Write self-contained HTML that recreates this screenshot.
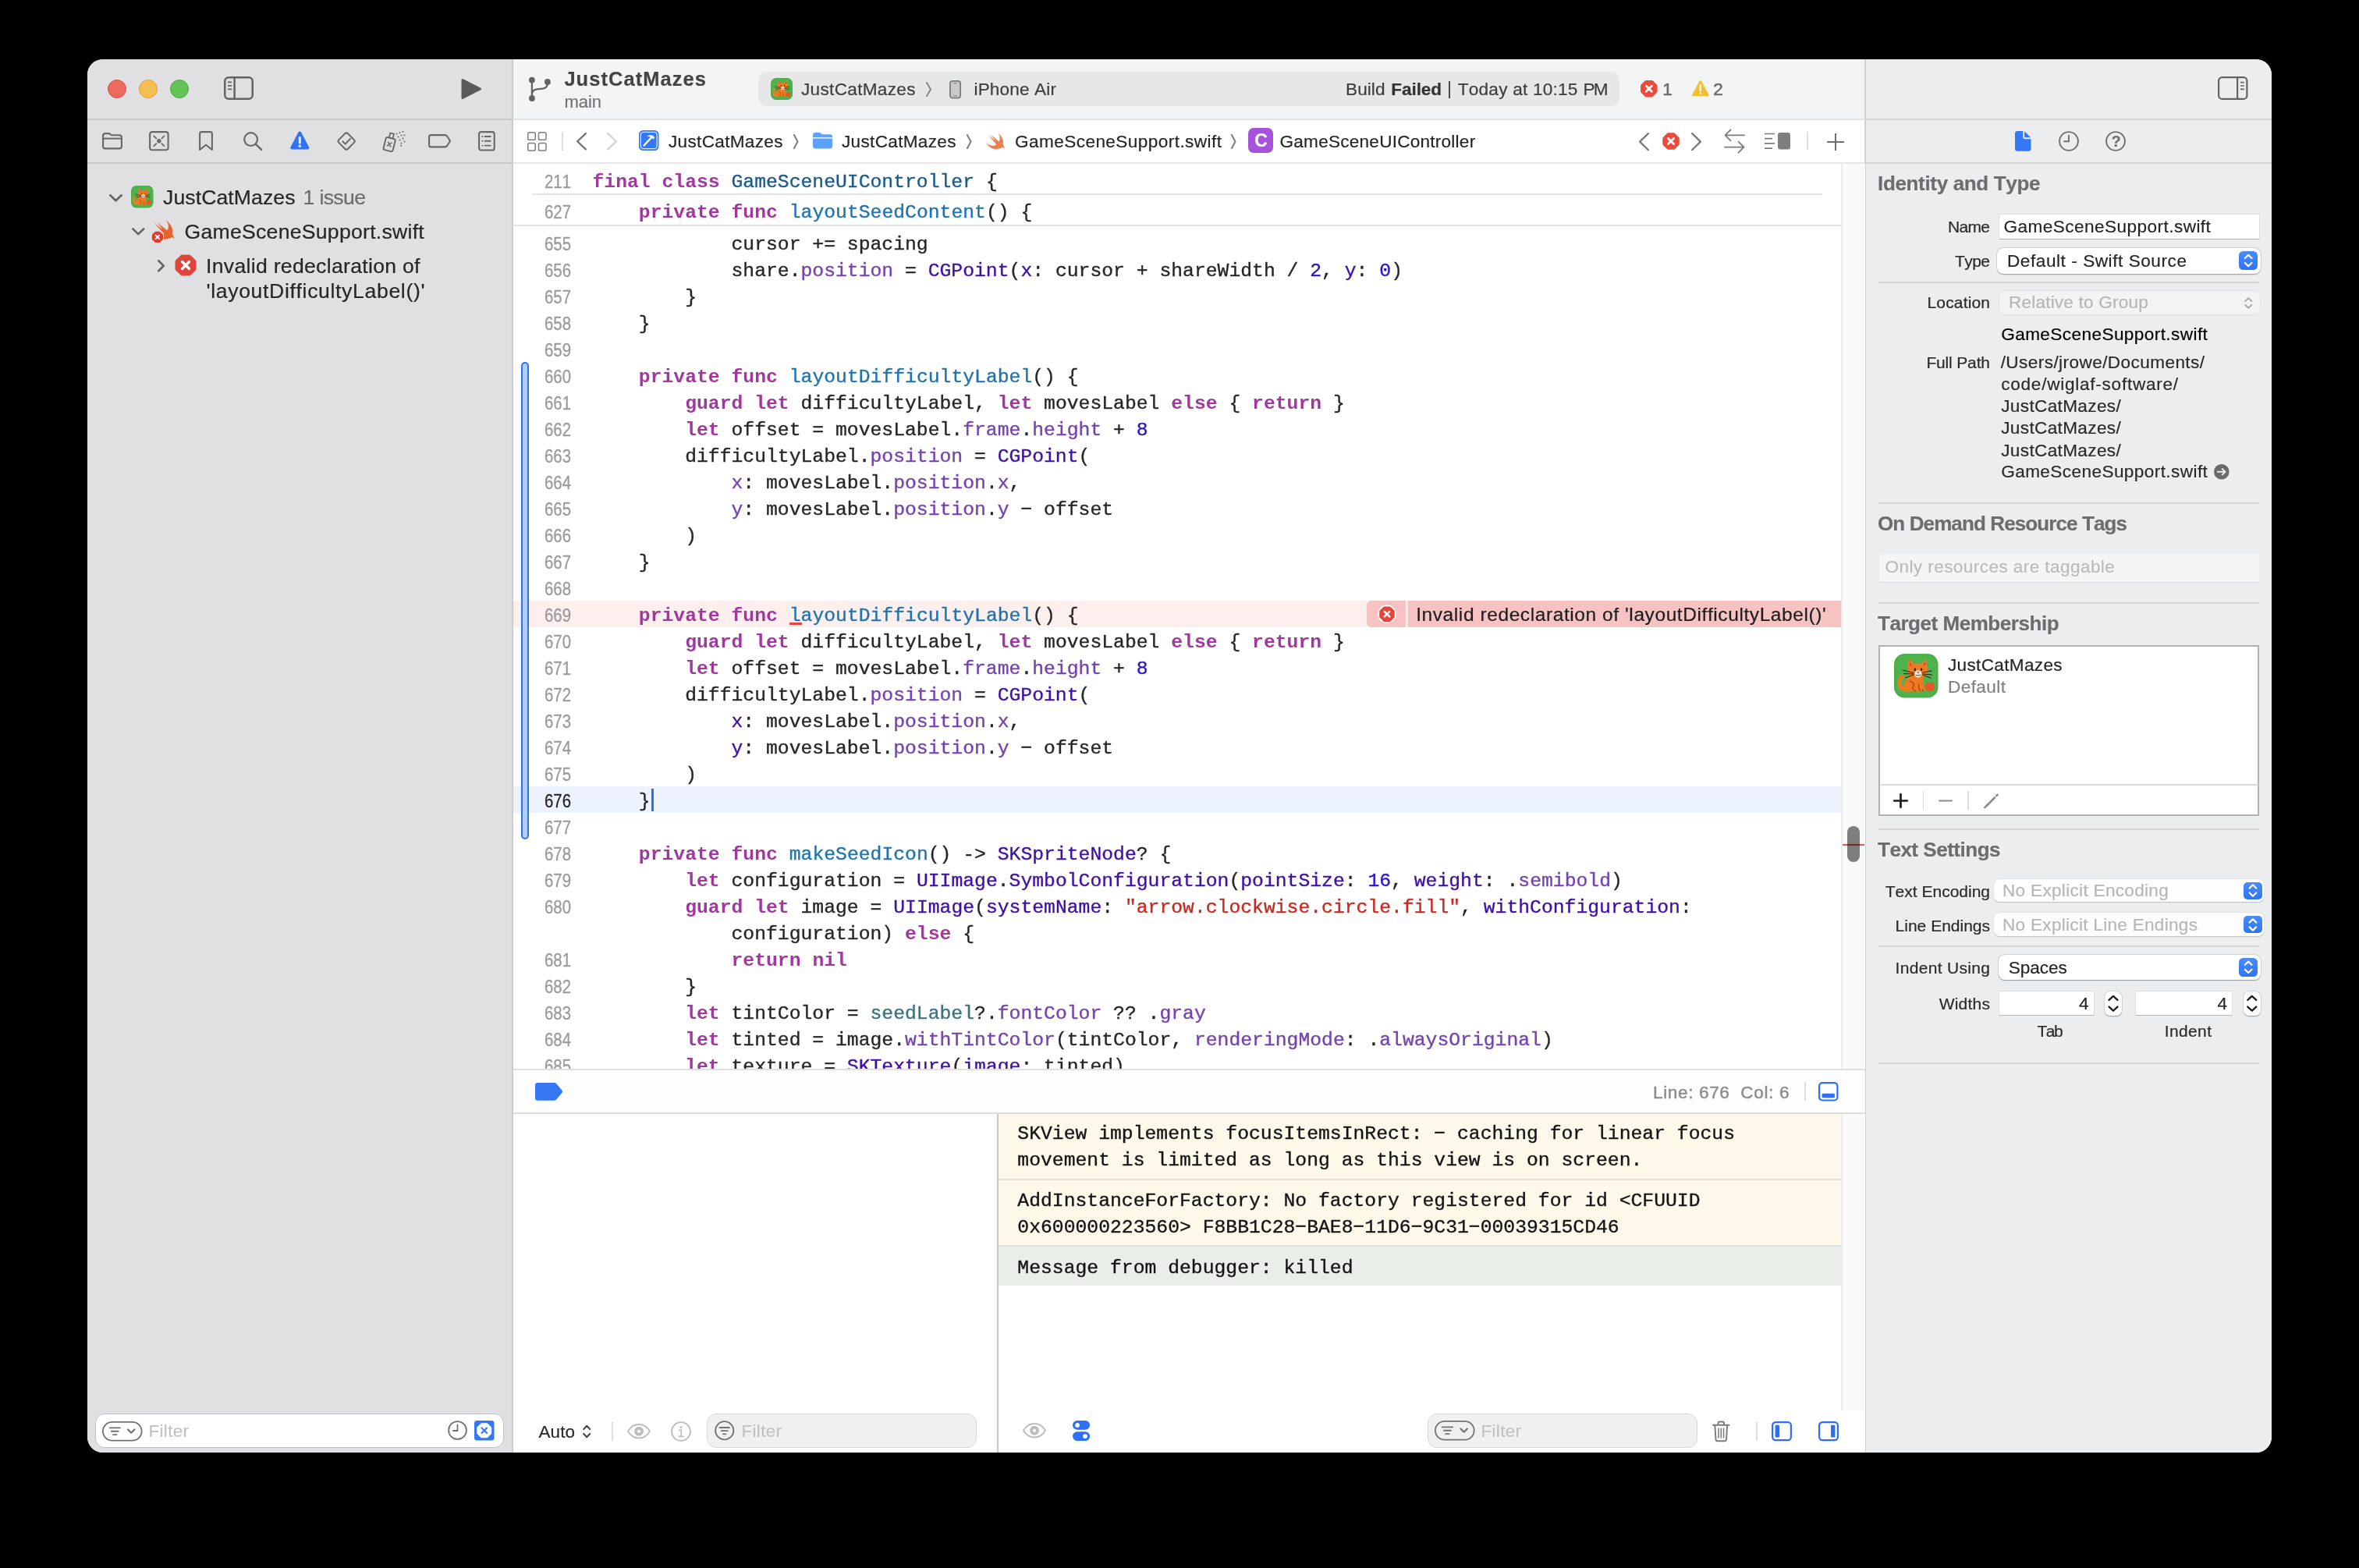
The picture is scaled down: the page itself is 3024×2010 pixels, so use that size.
<!DOCTYPE html>
<html><head><meta charset="utf-8"><title>Xcode</title>
<style>
*{box-sizing:border-box;margin:0;padding:0}
html,body{width:3024px;height:2010px;background:#000;overflow:hidden}
body{font-family:"Liberation Sans",sans-serif;color:#262626;position:relative;font-kerning:none}
#win{position:absolute;left:112px;top:76px;width:2800px;height:1786px;border-radius:20px;overflow:hidden;background:#fff}
#pg{position:absolute;left:-112px;top:-76px;width:3024px;height:2010px;will-change:transform}
.a{position:absolute}
.t{position:absolute;white-space:pre;line-height:1;-webkit-text-stroke:0.2px}
.mono{font-family:"Liberation Mono",monospace}
svg{position:absolute;overflow:visible}
/* code */
.cl{position:absolute;left:759.5px;margin-top:1px;-webkit-text-stroke:0.35px;height:34px;line-height:34px;white-space:pre;font-family:"Liberation Mono",monospace;font-size:24.73px;color:#262626}
.ln{position:absolute;left:632px;width:100px;text-align:right;height:34px;line-height:34px;font-size:23.4px;color:#9a9a9c;white-space:pre;transform:scaleX(0.87);transform-origin:100% 50%;margin-top:1px;-webkit-text-stroke:0.3px}
.k{color:#a2379f;font-weight:bold;-webkit-text-stroke:0}
.td{color:#1a5a8a}
.fd{color:#1f74ad}
.ty{color:#3f10a5}
.pr{color:#7443b1}
.iv{color:#39747b}
.nu{color:#2a12d2}
.st{color:#c9281f}
</style></head>
<body><div id="win"><div id="pg">
<div class="a" style="left:112px;top:76px;width:546px;height:1786px;background:#e0e0e2;"></div>
<div class="a" style="left:655px;top:76px;width:1px;height:1786px;background:#dbdbdd;"></div>
<div class="a" style="left:656px;top:76px;width:1px;height:1786px;background:#d3d3d5;"></div>
<div class="a" style="left:657px;top:76px;width:1px;height:1786px;background:#c4c5c7;"></div>
<div class="a" style="left:112px;top:152px;width:544px;height:2px;background:#c9c9cb;"></div>
<div class="a" style="left:112px;top:208px;width:544px;height:2px;background:#c9c9cb;"></div>
<div class="a" style="left:658px;top:76px;width:1733px;height:76px;background:#f3f4f6;"></div>
<div class="a" style="left:658px;top:152px;width:1733px;height:2px;background:#e3e3e5;"></div>
<div class="a" style="left:658px;top:154px;width:1733px;height:54px;background:#ffffff;"></div>
<div class="a" style="left:658px;top:208px;width:1733px;height:2px;background:#e6e6e6;"></div>
<div class="a" style="left:2391px;top:76px;width:521px;height:1786px;background:#ecedef;"></div>
<div class="a" style="left:2390px;top:76px;width:1.7px;height:1786px;background:#d0d1d3;"></div>
<div class="a" style="left:2392px;top:152px;width:520px;height:2px;background:#d4d5d7;"></div>
<div class="a" style="left:2392px;top:208px;width:520px;height:2px;background:#d4d5d7;"></div>
<div class="a" style="left:138px;top:102px;width:24px;height:24px;border-radius:50%;background:#ed6a5f;border:1px solid #d5544a"></div>
<div class="a" style="left:178px;top:102px;width:24px;height:24px;border-radius:50%;background:#f5bf4f;border:1px solid #d8a13a"></div>
<div class="a" style="left:218px;top:102px;width:24px;height:24px;border-radius:50%;background:#61c455;border:1px solid #4aa63f"></div>
<svg style="left:287px;top:98px;" width="38" height="30" viewBox="0 0 38 30" preserveAspectRatio="none"><rect x="1.25" y="1.25" width="35.5" height="27.5" rx="5" fill="none" stroke="#636366" stroke-width="2.5"/><path d="M13.6 1.5V28.5" stroke="#636366" stroke-width="2.5"/><path d="M5 7.400h5M5 11.900h5M5 16.400h5" stroke="#636366" stroke-width="1.8"/></svg>
<svg style="left:591px;top:100px;" width="27" height="28" viewBox="0 0 27 28" preserveAspectRatio="none"><path d="M2 2.5L24.5 14L2 25.5Z" fill="#5a5a5c" stroke="#5a5a5c" stroke-width="3" stroke-linejoin="round"/></svg>
<svg style="left:674px;top:94px;" width="36" height="40" viewBox="0 0 36 40" preserveAspectRatio="none"><circle cx="7.9" cy="8.6" r="3.9" fill="#636366"/><circle cx="7.9" cy="32" r="3.9" fill="#636366"/><circle cx="27.9" cy="11" r="3.9" fill="#636366"/><path d="M7.9 8.6V32M27.900 12C27.900 17 25.500 19.300 21.500 19.700L14.500 20.400C10.500 20.900 8.300 22.500 7.900 26.500" fill="none" stroke="#636366" stroke-width="2.3"/></svg>
<div class="t" style="left:723.4px;top:89.00px;font-size:25.5px;color:#444446;letter-spacing:1.042px;font-weight:bold;">JustCatMazes</div>
<div class="t" style="left:723.5px;top:120.00px;font-size:22px;color:#737376;letter-spacing:-0.058px;">main</div>
<div class="a" style="left:972px;top:92px;width:1104px;height:44px;background:#e6e7e9;border-radius:11px"></div>
<svg style="left:988px;top:100px;" width="28" height="28" viewBox="0 0 56 56" preserveAspectRatio="none"><rect x="0" y="0" width="56" height="56" rx="13.5" fill="#4bae49"/><rect x="2.500" y="2.500" width="51" height="51" rx="11" fill="#52b650" opacity=".55"/><path d="M15 45.500C8.500 45.500 6.300 40 7.200 35C7.800 31.500 8.300 29 10.200 29.200" fill="none" stroke="#f07a22" stroke-width="5.200" stroke-linecap="round"/><path d="M20.500 28C15.500 32 11.500 38 11.800 43C12 46.500 13.500 48 16 48H38.600C38.900 43 37.800 36 36.800 30Z" fill="#f07a22"/><path d="M17.200 15.500L18.600 7.400C18.700 6.800 19.300 6.700 19.700 7.100L25.200 12.700C27.500 12.300 31.500 12.300 34.800 12.700L39 7.200C39.400 6.700 40 6.900 40.100 7.500L42.200 16C42.600 19 42.500 23 41.500 25.500C40.300 28.800 36 31.500 30.500 31.500C24 31.500 19 29.500 17.500 25.500C16.800 23 16.800 18.500 17.200 15.500Z" fill="#f07a22"/><path d="M19.600 10.600L22.900 14.300L20.200 15.200Z" fill="#e83a3a"/><path d="M39.600 10.400L36.900 13.700L40.300 15Z" fill="#e83a3a"/><circle cx="30.600" cy="25.700" r="4.500" fill="#f6f1e6"/><path d="M29.100 23.200C29.100 22.300 32.100 22.300 32.100 23.200C32.100 24.200 31.100 25 30.600 25C30.100 25 29.100 24.200 29.100 23.200Z" fill="#ee4f7a"/><path d="M27.700 26.600C28 28.200 30.200 28.200 30.600 26.800C31 28.200 33.300 28.200 33.600 26.600" fill="none" stroke="#1d1d1b" stroke-width="0.900" stroke-linecap="round"/><ellipse cx="26.600" cy="20.100" rx="1.150" ry="1.900" fill="#1d1d1b"/><ellipse cx="34.800" cy="19.900" rx="1.150" ry="1.900" fill="#1d1d1b"/><path d="M24.800 24.300L11.200 20.800M25 25.700L12.300 25.400M24.800 26.900L14.300 30.600M36.600 23.900L47.800 21.700M36.600 25.700L48.200 26.800M36.600 27L46.700 30.800" stroke="#1d1d1b" stroke-width="0.950" stroke-linecap="round"/><path d="M20.100 35.300C23.500 35.300 25.700 37.500 25 40.500C24.500 42.500 22.500 43.500 23.800 44.800C25 45.500 26.500 46 27.200 47.600" fill="none" stroke="#7a3a10" stroke-width="1" stroke-linecap="round"/><path d="M31.300 39V43.500C31.500 45 33 46 33.500 47.600M36 45.500L37 47.500" fill="none" stroke="#7a3a10" stroke-width="1" stroke-linecap="round"/><circle cx="45.500" cy="42" r="5.900" fill="#e84a1f"/><path d="M41.500 39.500L46 37M41 42.500L48.500 38.300M42 45.300L50.300 40.500M44.500 47L51 43" stroke="#f4793f" stroke-width="0.800" stroke-linecap="round"/></svg>
<div class="t" style="left:1027.0px;top:104.00px;font-size:22.6px;color:#3d3d3f;letter-spacing:0.303px;">JustCatMazes</div>
<svg style="left:1186.5px;top:105px;" width="7" height="19" viewBox="0 0 7 19" preserveAspectRatio="none"><path d="M1 1L6 9.500L1 18" fill="none" stroke="#858587" stroke-width="2" stroke-linecap="round" stroke-linejoin="round"/></svg>
<svg style="left:1217px;top:102.5px;" width="15" height="23.5" viewBox="0 0 15 23.5" preserveAspectRatio="none"><rect x="0.9" y="0.9" width="13.2" height="21.7" rx="3" fill="#c9c9cb" stroke="#7c7c7e" stroke-width="1.8"/><path d="M5.500 3.800h4M5 20h5" stroke="#7c7c7e" stroke-width="1.100"/></svg>
<div class="t" style="left:1248.5px;top:104.00px;font-size:22.6px;color:#3d3d3f;letter-spacing:0.141px;">iPhone Air</div>
<div class="t" style="left:1725.0px;top:104.00px;font-size:22.6px;color:#3d3d3f;letter-spacing:0.065px;">Build</div>
<div class="t" style="left:1783.2px;top:104.00px;font-size:22.6px;color:#333335;letter-spacing:-0.063px;font-weight:bold;">Failed</div>
<div class="a" style="left:1857px;top:104px;width:2px;height:22px;background:#4a4a4c;"></div>
<div class="t" style="left:1868.8px;top:104.00px;font-size:22.6px;color:#3d3d3f;letter-spacing:0.213px;">Today at 10:15</div>
<div class="t" style="left:2029.5px;top:104.00px;font-size:22.6px;color:#3d3d3f;letter-spacing:-1.900px;">PM</div>
<svg style="left:0;top:0" width="3024" height="2010"><polygon points="2122.40,117.26 2117.36,122.30 2110.24,122.30 2105.20,117.26 2105.20,110.14 2110.24,105.10 2117.36,105.10 2122.40,110.14" fill="#e74c3c" stroke="#e74c3c" stroke-width="4.30" stroke-linejoin="round"/><path d="M2110.25 110.15L2117.35 117.25M2117.35 110.15L2110.25 117.25" stroke="#fff" stroke-width="2.69" stroke-linecap="round"/></svg>
<div class="t" style="left:2131.3px;top:104.00px;font-size:22.5px;color:#6c6c6e;-webkit-text-stroke:0.55px #6c6c6e;">1</div>
<svg style="left:2169px;top:103px;" width="21.5" height="21" viewBox="0 0 21.5 21" preserveAspectRatio="none"><path d="M10.75 1.800L20 18.800H1.500Z" fill="#f0c02e" stroke="#f0c02e" stroke-width="3" stroke-linejoin="round"/><path d="M10.750 6.500V13" stroke="#fff" stroke-width="2.300" stroke-linecap="round"/><circle cx="10.750" cy="16.400" r="1.350" fill="#fff"/></svg>
<div class="t" style="left:2196.3px;top:104.00px;font-size:22.5px;color:#6c6c6e;-webkit-text-stroke:0.55px #6c6c6e;">2</div>
<svg style="left:2843px;top:98px;" width="38.5" height="30" viewBox="0 0 38.5 30" preserveAspectRatio="none"><rect x="1.100" y="1.100" width="36.300" height="27.800" rx="4.500" fill="none" stroke="#636366" stroke-width="2.200"/><path d="M25.100 1.500V28.500" stroke="#636366" stroke-width="2.200"/><path d="M29 7.600h4.800M29 12h4.800M29 16.400h4.800" stroke="#636366" stroke-width="1.600"/></svg>
<svg style="left:131px;top:170px;" width="26" height="21.5" viewBox="0 0 26 21.5" preserveAspectRatio="none"><path d="M1.100 4C1.100 2.400 2.400 1.100 4 1.100H8.300C9.300 1.100 9.900 1.400 10.500 2.100L11.600 3.300H22C23.600 3.300 24.900 4.600 24.900 6.200V17.500C24.900 19.100 23.600 20.400 22 20.400H4C2.400 20.400 1.100 19.100 1.100 17.500Z" fill="none" stroke="#68686b" stroke-width="2.100" stroke-linejoin="round"/><path d="M1.500 7.600H24.500" stroke="#68686b" stroke-width="2"/></svg>
<svg style="left:191.3px;top:168px;" width="25.7" height="25.4" viewBox="0 0 25.7 25.4" preserveAspectRatio="none"><rect x="1.100" y="1.100" width="23.500" height="23.200" rx="3" fill="none" stroke="#68686b" stroke-width="2.100"/><circle cx="12.850" cy="12.700" r="2.700" fill="#68686b"/><path d="M6.300 6.300L9.300 9.300M19.400 6.300L16.400 9.300M6.300 19.100L9.300 16.100M19.400 19.100L16.400 16.100" stroke="#68686b" stroke-width="1.800" stroke-linecap="round"/></svg>
<svg style="left:255px;top:168px;" width="18" height="25.6" viewBox="0 0 18 25.6" preserveAspectRatio="none"><path d="M1.100 3.500C1.100 2.200 2.100 1.100 3.500 1.100H14.500C15.900 1.100 16.900 2.200 16.900 3.500V24L9 17.800L1.100 24Z" fill="none" stroke="#68686b" stroke-width="2.100" stroke-linejoin="round"/></svg>
<svg style="left:312px;top:169px;" width="24.5" height="24" viewBox="0 0 24.5 24" preserveAspectRatio="none"><circle cx="9.600" cy="9.600" r="8.400" fill="none" stroke="#68686b" stroke-width="2.200"/><path d="M15.800 15.800L23.200 22.800" stroke="#68686b" stroke-width="2.500" stroke-linecap="round"/></svg>
<svg style="left:371.7px;top:167.7px;" width="24.6" height="24.5" viewBox="0 0 24.6 24.5" preserveAspectRatio="none"><path d="M12.300 2.500L22.300 21.500H2.300Z" fill="#3273f6" stroke="#3273f6" stroke-width="4" stroke-linejoin="round"/><path d="M12.300 8.300V15" stroke="#e8efff" stroke-width="3" stroke-linecap="round"/><circle cx="12.300" cy="19.300" r="1.700" fill="#e8efff"/></svg>
<svg style="left:431px;top:168px;" width="26.2" height="26" viewBox="0 0 26.2 26" preserveAspectRatio="none"><rect x="4.900" y="4.800" width="16.400" height="16.400" rx="2.700" transform="rotate(45 13.100 13)" fill="none" stroke="#68686b" stroke-width="2"/><path d="M8.300 13.300L11.700 16.500L18 9.800" fill="none" stroke="#68686b" stroke-width="1.900" stroke-linecap="round" stroke-linejoin="round"/></svg>
<svg style="left:489.5px;top:168px;" width="30.5" height="27" viewBox="0 0 30.5 27" preserveAspectRatio="none"><g transform="rotate(14 9 16)"><rect x="3.200" y="8.800" width="12.400" height="16.500" rx="2.200" fill="none" stroke="#68686b" stroke-width="1.900"/><rect x="7" y="2.600" width="4.800" height="6" fill="none" stroke="#68686b" stroke-width="1.700"/><path d="M7.200 14.500L11.600 19.300M11.600 14.500L7.200 19.300" stroke="#68686b" stroke-width="1.600" stroke-linecap="round"/></g><circle cx="18.5" cy="3.5" r="0.950" fill="#68686b"/><circle cx="22.5" cy="2" r="0.950" fill="#68686b"/><circle cx="26.5" cy="0.8" r="0.950" fill="#68686b"/><circle cx="20.5" cy="7.5" r="0.950" fill="#68686b"/><circle cx="24.5" cy="5.5" r="0.950" fill="#68686b"/><circle cx="28.5" cy="5.2" r="0.950" fill="#68686b"/><circle cx="22.5" cy="11.5" r="0.950" fill="#68686b"/><circle cx="26.5" cy="9.5" r="0.950" fill="#68686b"/><circle cx="24.5" cy="15.5" r="0.950" fill="#68686b"/><circle cx="28.5" cy="13.5" r="0.950" fill="#68686b"/><circle cx="24.2" cy="18.8" r="0.950" fill="#68686b"/></svg>
<svg style="left:549px;top:172.3px;" width="29.5" height="17.5" viewBox="0 0 29.5 17.5" preserveAspectRatio="none"><path d="M1.100 3.600C1.100 2.200 2.200 1.100 3.600 1.100H21.600C22.600 1.100 23.300 1.500 23.900 2.300L28.100 8.750L23.900 15.200C23.300 16 22.600 16.400 21.600 16.400H3.600C2.200 16.400 1.100 15.300 1.100 13.900Z" fill="none" stroke="#68686b" stroke-width="2.100" stroke-linejoin="round"/></svg>
<svg style="left:613.2px;top:168px;" width="21.8" height="25.6" viewBox="0 0 21.8 25.6" preserveAspectRatio="none"><rect x="1.100" y="1.100" width="19.600" height="23.400" rx="2.600" fill="none" stroke="#68686b" stroke-width="2.100"/><path d="M8 7H16.500M8 12.800H16.500M8 18.600H16.500" stroke="#68686b" stroke-width="1.900"/><path d="M4.600 7H6.400M4.600 12.800H6.400M4.600 18.600H6.400" stroke="#68686b" stroke-width="1.900"/></svg>
<svg style="left:140px;top:248.5px;" width="17" height="9.5" viewBox="0 0 17 9.5" preserveAspectRatio="none"><path d="M1.3 1.3L8.5 8.2L15.7 1.3" fill="none" stroke="#636366" stroke-width="2.6" stroke-linecap="round" stroke-linejoin="round"/></svg>
<svg style="left:167.5px;top:238px;" width="28.5" height="28.5" viewBox="0 0 56 56" preserveAspectRatio="none"><rect x="0" y="0" width="56" height="56" rx="13.5" fill="#4bae49"/><rect x="2.500" y="2.500" width="51" height="51" rx="11" fill="#52b650" opacity=".55"/><path d="M15 45.500C8.500 45.500 6.300 40 7.200 35C7.800 31.500 8.300 29 10.200 29.200" fill="none" stroke="#f07a22" stroke-width="5.200" stroke-linecap="round"/><path d="M20.500 28C15.500 32 11.500 38 11.800 43C12 46.500 13.500 48 16 48H38.600C38.900 43 37.800 36 36.800 30Z" fill="#f07a22"/><path d="M17.200 15.500L18.600 7.400C18.700 6.800 19.300 6.700 19.700 7.100L25.200 12.700C27.500 12.300 31.500 12.300 34.800 12.700L39 7.200C39.400 6.700 40 6.900 40.100 7.500L42.200 16C42.600 19 42.500 23 41.500 25.500C40.300 28.800 36 31.500 30.500 31.500C24 31.500 19 29.500 17.500 25.500C16.800 23 16.800 18.500 17.200 15.500Z" fill="#f07a22"/><path d="M19.600 10.600L22.900 14.300L20.200 15.200Z" fill="#e83a3a"/><path d="M39.600 10.400L36.900 13.700L40.300 15Z" fill="#e83a3a"/><circle cx="30.600" cy="25.700" r="4.500" fill="#f6f1e6"/><path d="M29.100 23.200C29.100 22.300 32.100 22.300 32.100 23.200C32.100 24.200 31.100 25 30.600 25C30.100 25 29.100 24.200 29.100 23.200Z" fill="#ee4f7a"/><path d="M27.700 26.600C28 28.200 30.200 28.200 30.600 26.800C31 28.200 33.300 28.200 33.600 26.600" fill="none" stroke="#1d1d1b" stroke-width="0.900" stroke-linecap="round"/><ellipse cx="26.600" cy="20.100" rx="1.150" ry="1.900" fill="#1d1d1b"/><ellipse cx="34.800" cy="19.900" rx="1.150" ry="1.900" fill="#1d1d1b"/><path d="M24.800 24.300L11.200 20.800M25 25.700L12.300 25.400M24.800 26.900L14.300 30.600M36.600 23.900L47.800 21.700M36.600 25.700L48.200 26.800M36.600 27L46.700 30.800" stroke="#1d1d1b" stroke-width="0.950" stroke-linecap="round"/><path d="M20.100 35.300C23.500 35.300 25.700 37.500 25 40.500C24.500 42.500 22.500 43.500 23.800 44.800C25 45.500 26.500 46 27.200 47.600" fill="none" stroke="#7a3a10" stroke-width="1" stroke-linecap="round"/><path d="M31.300 39V43.500C31.500 45 33 46 33.500 47.600M36 45.500L37 47.500" fill="none" stroke="#7a3a10" stroke-width="1" stroke-linecap="round"/><circle cx="45.500" cy="42" r="5.900" fill="#e84a1f"/><path d="M41.500 39.500L46 37M41 42.500L48.500 38.300M42 45.300L50.300 40.500M44.500 47L51 43" stroke="#f4793f" stroke-width="0.800" stroke-linecap="round"/></svg>
<div class="t" style="left:209.0px;top:240.00px;font-size:26.6px;color:#262628;letter-spacing:0.090px;">JustCatMazes</div>
<div class="t" style="left:388.5px;top:240.00px;font-size:26.6px;color:#6c6c6f;letter-spacing:-0.628px;">1 issue</div>
<svg style="left:168.5px;top:292px;" width="16.5" height="9.5" viewBox="0 0 16.5 9.5" preserveAspectRatio="none"><path d="M1.3 1.3L8.25 8.2L15.2 1.3" fill="none" stroke="#636366" stroke-width="2.6" stroke-linecap="round" stroke-linejoin="round"/></svg>
<svg style="left:194.4px;top:282.4px;" width="30.3" height="25.9" viewBox="0 0 24.5 22" preserveAspectRatio="none"><path fill="#e7652c" d="M15.2 .3C17.8 2.2 20.6 6 21.600 9.300C22.300 11.500 22.200 13.400 21.600 14.700C22.600 16.300 23.500 19 23.700 21.400C22.900 20 22.400 19.200 21.600 18.800C19.800 19.900 16.500 21.300 12.200 21.100C7 20.900 2.800 17.500 .300 13.700C3 15.500 6 16.600 8.900 16.800C10.800 16.900 12.200 16 13.200 15L3.100 3.600L11.700 10.100L6.100 2.500L16.500 11.400C17.600 9.500 18 7 17.500 4.800C17 3 16.200 1.500 15.200 .300Z"/></svg>
<svg style="left:0;top:0" width="3024" height="2010"><circle cx="201.9" cy="303.9" r="8.300" fill="#e0e0e2"/></svg>
<svg style="left:0;top:0" width="3024" height="2010"><polygon points="207.58,306.25 204.25,309.58 199.55,309.58 196.22,306.25 196.22,301.55 199.55,298.22 204.25,298.22 207.58,301.55" fill="#e23b2e" stroke="#e23b2e" stroke-width="2.84" stroke-linejoin="round"/><path d="M199.56 301.56L204.24 306.24M204.24 301.56L199.56 306.24" stroke="#fff" stroke-width="1.77" stroke-linecap="round"/></svg>
<div class="t" style="left:236.5px;top:284.00px;font-size:26.6px;color:#262628;letter-spacing:0.272px;">GameSceneSupport.swift</div>
<svg style="left:201.5px;top:333px;" width="9" height="15.5" viewBox="0 0 9 15.5" preserveAspectRatio="none"><path d="M1.25 1.25L7.75 7.75L1.25 14.25" fill="none" stroke="#636366" stroke-width="2.5" stroke-linecap="round" stroke-linejoin="round"/></svg>
<svg style="left:0;top:0" width="3024" height="2010"><polygon points="248.80,344.47 242.47,350.80 233.53,350.80 227.20,344.47 227.20,335.53 233.53,329.20 242.47,329.20 248.80,335.53" fill="#e0443a" stroke="#e0443a" stroke-width="5.40" stroke-linejoin="round"/><path d="M233.54 335.55L242.46 344.45M242.46 335.55L233.54 344.45" stroke="#fff" stroke-width="3.38" stroke-linecap="round"/></svg>
<div class="t" style="left:264.0px;top:328.00px;font-size:26.6px;color:#262628;letter-spacing:0.300px;">Invalid redeclaration of</div>
<div class="t" style="left:264.5px;top:360.00px;font-size:26.6px;color:#262628;letter-spacing:0.650px;">'layoutDifficultyLabel()'</div>
<div class="a" style="left:122px;top:1812px;width:523.5px;height:43.5px;border-radius:12px;background:#fff;border:1.500px solid #c3c3c5"></div>
<svg style="left:130.8px;top:1821.5px;" width="51.5" height="25.5" viewBox="0 0 51.5 25.5" preserveAspectRatio="none"><rect x="0.900" y="0.900" width="49.700" height="23.700" rx="11.850" fill="none" stroke="#717173" stroke-width="1.800"/><path d="M9.500 8.300H23M11.800 12.750H20.700M14 17.200H18.500" stroke="#717173" stroke-width="1.800" stroke-linecap="round"/><path d="M33 10.500L37.200 14.700L41.400 10.500" fill="none" stroke="#717173" stroke-width="2.200" stroke-linecap="round" stroke-linejoin="round"/></svg>
<div class="t" style="left:190.5px;top:1824.00px;font-size:22.3px;color:#c2c2c4;letter-spacing:0.390px;">Filter</div>
<svg style="left:574.4px;top:1821.3px;" width="25" height="25" viewBox="0 0 25 25" preserveAspectRatio="none"><circle cx="12.500" cy="12.500" r="11.400" fill="none" stroke="#717173" stroke-width="1.800"/><path d="M12.500 5.500V13H6.800" fill="none" stroke="#717173" stroke-width="1.800" stroke-linecap="round" stroke-linejoin="round"/></svg>
<svg style="left:608.3px;top:1821.3px;" width="25.5" height="25.5" viewBox="0 0 25.5 25.5" preserveAspectRatio="none"><rect x="0" y="0" width="25.500" height="25.500" rx="3.500" fill="#3478f6"/><path d="M8.800 3.800H16.700L21.700 8.800V16.700L16.700 21.700H8.800L3.800 16.700V8.800Z" fill="#fff" stroke="#fff" stroke-width="1" stroke-linejoin="round"/><path d="M9.500 9.500L16 16M16 9.500L9.500 16" stroke="#3478f6" stroke-width="2.200" stroke-linecap="round"/></svg>
<svg style="left:676px;top:169px;" width="25.5" height="25" viewBox="0 0 25.5 25" preserveAspectRatio="none"><rect x="0.75" y="0.75" width="9.5" height="9.500" rx="1.800" fill="none" stroke="#7e7e80" stroke-width="1.500"/><rect x="0.75" y="14.5" width="9.5" height="9.500" rx="1.800" fill="none" stroke="#7e7e80" stroke-width="1.500"/><rect x="14.5" y="0.75" width="9.5" height="9.500" rx="1.800" fill="none" stroke="#7e7e80" stroke-width="1.500"/><rect x="14.5" y="14.5" width="9.5" height="9.500" rx="1.800" fill="none" stroke="#7e7e80" stroke-width="1.500"/></svg>
<div class="a" style="left:720px;top:169px;width:2px;height:24px;background:#dddddf;"></div>
<svg style="left:739px;top:170px;" width="13" height="22.5" viewBox="0 0 13 22.5" preserveAspectRatio="none"><path d="M11.9 1.1L1.1 11.25L11.9 21.4" fill="none" stroke="#6f6f71" stroke-width="2.2" stroke-linecap="round" stroke-linejoin="round"/></svg>
<svg style="left:778px;top:170px;" width="13" height="22.5" viewBox="0 0 13 22.5" preserveAspectRatio="none"><path d="M1.1 1.1L11.9 11.25L1.1 21.4" fill="none" stroke="#d2d2d4" stroke-width="2.2" stroke-linecap="round" stroke-linejoin="round"/></svg>
<svg style="left:819px;top:167px;" width="25.5" height="26" viewBox="0 0 25.5 26" preserveAspectRatio="none"><rect x="0" y="0" width="25.500" height="26" rx="5.500" fill="#3478f6"/><rect x="2.300" y="2.300" width="20.900" height="21.400" rx="3.600" fill="none" stroke="#dbe8ff" stroke-width="1.300"/><path d="M6.500 19.500L15.500 9.800" stroke="#fff" stroke-width="2.400" stroke-linecap="round"/><path d="M11.300 7.600C14 5.600 17.500 6.300 20 9.300L18.300 10.900C17.300 9.900 16.500 9.600 15.800 10.100L14.300 8.600C14.800 7.900 13.300 7.300 11.300 7.600Z" fill="#fff" stroke="#fff" stroke-width="0.800" stroke-linejoin="round"/></svg>
<div class="t" style="left:857.0px;top:171.00px;font-size:22.6px;color:#262626;letter-spacing:0.303px;">JustCatMazes</div>
<svg style="left:1017px;top:171.7px;" width="6.5" height="19" viewBox="0 0 6.5 19" preserveAspectRatio="none"><path d="M1 1L5.5 9.5L1 18" fill="none" stroke="#808082" stroke-width="2.1" stroke-linecap="round" stroke-linejoin="round"/></svg>
<svg style="left:1042px;top:169.5px;" width="25" height="20.5" viewBox="0 0 25 20.5" preserveAspectRatio="none"><path d="M0 3C0 1.300 1.300 0 3 0H8.200C9.400 0 10 .400 10.800 1.300L11.800 2.300H22C23.700 2.300 25 3.600 25 5.300V6.200H0Z" fill="#5da2f8"/><path d="M0 7.600H25V17.500C25 19.200 23.700 20.500 22 20.500H3C1.300 20.500 0 19.200 0 17.500Z" fill="#5da2f8"/></svg>
<div class="t" style="left:1079.0px;top:171.00px;font-size:22.6px;color:#262626;letter-spacing:0.303px;">JustCatMazes</div>
<svg style="left:1238.5px;top:171.7px;" width="6.5" height="19" viewBox="0 0 6.5 19" preserveAspectRatio="none"><path d="M1 1L5.5 9.5L1 18" fill="none" stroke="#808082" stroke-width="2.1" stroke-linecap="round" stroke-linejoin="round"/></svg>
<svg style="left:1264px;top:169.5px;" width="24.5" height="22" viewBox="0 0 24.5 22" preserveAspectRatio="none"><path fill="#ee8050" d="M15.2 .3C17.8 2.2 20.6 6 21.600 9.300C22.300 11.500 22.200 13.400 21.600 14.700C22.600 16.300 23.500 19 23.700 21.400C22.900 20 22.400 19.200 21.600 18.800C19.800 19.900 16.500 21.300 12.200 21.100C7 20.900 2.800 17.500 .300 13.700C3 15.500 6 16.600 8.900 16.800C10.800 16.900 12.200 16 13.200 15L3.100 3.600L11.700 10.100L6.100 2.500L16.500 11.400C17.600 9.500 18 7 17.500 4.800C17 3 16.200 1.500 15.200 .300Z"/></svg>
<div class="t" style="left:1301.0px;top:171.00px;font-size:22.6px;color:#262626;letter-spacing:0.417px;">GameSceneSupport.swift</div>
<svg style="left:1578px;top:171.7px;" width="6.5" height="19" viewBox="0 0 6.5 19" preserveAspectRatio="none"><path d="M1 1L5.5 9.5L1 18" fill="none" stroke="#808082" stroke-width="2.1" stroke-linecap="round" stroke-linejoin="round"/></svg>
<div class="a" style="left:1600px;top:164px;width:32px;height:32px;border-radius:7px;background:#a653d9"></div>
<div class="t" style="left:1608.2px;top:169.00px;font-size:23px;color:#ffffff;font-weight:bold;">C</div>
<div class="t" style="left:1640.5px;top:171.00px;font-size:22.6px;color:#262626;letter-spacing:0.227px;">GameSceneUIController</div>
<svg style="left:2100.8px;top:169.6px;" width="13" height="23.3" viewBox="0 0 13 23.3" preserveAspectRatio="none"><path d="M11.9 1.1L1.1 11.65L11.9 22.2" fill="none" stroke="#777779" stroke-width="2.2" stroke-linecap="round" stroke-linejoin="round"/></svg>
<svg style="left:0;top:0" width="3024" height="2010"><polygon points="2150.60,184.56 2145.56,189.60 2138.44,189.60 2133.40,184.56 2133.40,177.44 2138.44,172.40 2145.56,172.40 2150.60,177.44" fill="#e74c3c" stroke="#e74c3c" stroke-width="4.30" stroke-linejoin="round"/><path d="M2138.45 177.45L2145.55 184.55M2145.55 177.45L2138.45 184.55" stroke="#fff" stroke-width="2.69" stroke-linecap="round"/></svg>
<svg style="left:2168px;top:169.6px;" width="13" height="23.3" viewBox="0 0 13 23.3" preserveAspectRatio="none"><path d="M1.1 1.1L11.9 11.65L1.1 22.2" fill="none" stroke="#777779" stroke-width="2.2" stroke-linecap="round" stroke-linejoin="round"/></svg>
<svg style="left:2210px;top:165px;" width="27" height="32" viewBox="0 0 27 32" preserveAspectRatio="none"><path d="M26 8.300H1.500M8.500 1.300L1.500 8.300L8.500 15.300" fill="none" stroke="#7b7b7d" stroke-width="1.800" stroke-linecap="round" stroke-linejoin="round"/><path d="M1 23.700H25.500M18.500 16.700L25.500 23.700L18.500 30.700" fill="none" stroke="#7b7b7d" stroke-width="1.800" stroke-linecap="round" stroke-linejoin="round"/></svg>
<svg style="left:2262.2px;top:170px;" width="33" height="21.8" viewBox="0 0 33 21.8" preserveAspectRatio="none"><path d="M0 1.500H13M0 7.700H10M0 13.900H13M0 20.100H10" stroke="#7b7b7d" stroke-width="1.700"/><rect x="17" y="0" width="16" height="21.500" rx="3.200" fill="#7e7e80"/></svg>
<div class="a" style="left:2316px;top:169px;width:2px;height:23px;background:#dddddf;"></div>
<svg style="left:2342px;top:171px;" width="22" height="22" viewBox="0 0 22 22" preserveAspectRatio="none"><path d="M11 0.800V21.200M0.800 11H21.200" stroke="#6f6f71" stroke-width="2" stroke-linecap="round"/></svg>
<div class="a" style="left:658px;top:210px;width:1733px;height:1161px;background:#ffffff;"></div>
<div class="a" style="left:2360px;top:210px;width:30px;height:1161px;background:#fafafa;"></div>
<div class="a" style="left:2360px;top:210px;width:2px;height:1161px;background:#ececec;"></div>
<div class="a" style="left:658px;top:770px;width:1094px;height:34px;background:#fcefee;"></div>
<div class="a" style="left:658px;top:1008px;width:1702px;height:34px;background:#ecf3fe;"></div>
<div class="a" style="left:0;top:210px;width:2360px;height:1161px;overflow:hidden"><div class="a" style="left:0;top:-210px;width:3024px;height:2010px">
<div class="ln" style="top:295px;color:#9a9a9c">655</div>
<div class="cl" style="top:295px">            cursor += spacing</div>
<div class="ln" style="top:329px;color:#9a9a9c">656</div>
<div class="cl" style="top:329px">            share.<span class="pr">position</span> = <span class="ty">CGPoint</span>(<span class="ty">x</span>: cursor + shareWidth / <span class="nu">2</span>, <span class="ty">y</span>: <span class="nu">0</span>)</div>
<div class="ln" style="top:363px;color:#9a9a9c">657</div>
<div class="cl" style="top:363px">        }</div>
<div class="ln" style="top:397px;color:#9a9a9c">658</div>
<div class="cl" style="top:397px">    }</div>
<div class="ln" style="top:431px;color:#9a9a9c">659</div>
<div class="cl" style="top:431px"></div>
<div class="ln" style="top:465px;color:#9a9a9c">660</div>
<div class="cl" style="top:465px">    <span class="k">private</span> <span class="k">func</span> <span class="fd">layoutDifficultyLabel</span>() {</div>
<div class="ln" style="top:499px;color:#9a9a9c">661</div>
<div class="cl" style="top:499px">        <span class="k">guard</span> <span class="k">let</span> difficultyLabel, <span class="k">let</span> movesLabel <span class="k">else</span> { <span class="k">return</span> }</div>
<div class="ln" style="top:533px;color:#9a9a9c">662</div>
<div class="cl" style="top:533px">        <span class="k">let</span> offset = movesLabel.<span class="pr">frame</span>.<span class="pr">height</span> + <span class="nu">8</span></div>
<div class="ln" style="top:567px;color:#9a9a9c">663</div>
<div class="cl" style="top:567px">        difficultyLabel.<span class="pr">position</span> = <span class="ty">CGPoint</span>(</div>
<div class="ln" style="top:601px;color:#9a9a9c">664</div>
<div class="cl" style="top:601px">            <span class="pr">x</span>: movesLabel.<span class="pr">position</span>.<span class="pr">x</span>,</div>
<div class="ln" style="top:635px;color:#9a9a9c">665</div>
<div class="cl" style="top:635px">            <span class="pr">y</span>: movesLabel.<span class="pr">position</span>.<span class="pr">y</span> − offset</div>
<div class="ln" style="top:669px;color:#9a9a9c">666</div>
<div class="cl" style="top:669px">        )</div>
<div class="ln" style="top:703px;color:#9a9a9c">667</div>
<div class="cl" style="top:703px">    }</div>
<div class="ln" style="top:737px;color:#9a9a9c">668</div>
<div class="cl" style="top:737px"></div>
<div class="ln" style="top:771px;color:#9a9a9c">669</div>
<div class="cl" style="top:771px">    <span class="k">private</span> <span class="k">func</span> <span class="fd">layoutDifficultyLabel</span>() {</div>
<div class="ln" style="top:805px;color:#9a9a9c">670</div>
<div class="cl" style="top:805px">        <span class="k">guard</span> <span class="k">let</span> difficultyLabel, <span class="k">let</span> movesLabel <span class="k">else</span> { <span class="k">return</span> }</div>
<div class="ln" style="top:839px;color:#9a9a9c">671</div>
<div class="cl" style="top:839px">        <span class="k">let</span> offset = movesLabel.<span class="pr">frame</span>.<span class="pr">height</span> + <span class="nu">8</span></div>
<div class="ln" style="top:873px;color:#9a9a9c">672</div>
<div class="cl" style="top:873px">        difficultyLabel.<span class="pr">position</span> = <span class="ty">CGPoint</span>(</div>
<div class="ln" style="top:907px;color:#9a9a9c">673</div>
<div class="cl" style="top:907px">            <span class="ty">x</span>: movesLabel.<span class="pr">position</span>.<span class="pr">x</span>,</div>
<div class="ln" style="top:941px;color:#9a9a9c">674</div>
<div class="cl" style="top:941px">            <span class="ty">y</span>: movesLabel.<span class="pr">position</span>.<span class="pr">y</span> − offset</div>
<div class="ln" style="top:975px;color:#9a9a9c">675</div>
<div class="cl" style="top:975px">        )</div>
<div class="ln" style="top:1009px;color:#262626">676</div>
<div class="cl" style="top:1009px">    }</div>
<div class="ln" style="top:1043px;color:#9a9a9c">677</div>
<div class="cl" style="top:1043px"></div>
<div class="ln" style="top:1077px;color:#9a9a9c">678</div>
<div class="cl" style="top:1077px">    <span class="k">private</span> <span class="k">func</span> <span class="fd">makeSeedIcon</span>() -&gt; <span class="ty">SKSpriteNode</span>? {</div>
<div class="ln" style="top:1111px;color:#9a9a9c">679</div>
<div class="cl" style="top:1111px">        <span class="k">let</span> configuration = <span class="ty">UIImage</span>.<span class="ty">SymbolConfiguration</span>(<span class="ty">pointSize</span>: <span class="nu">16</span>, <span class="ty">weight</span>: .<span class="pr">semibold</span>)</div>
<div class="ln" style="top:1145px;color:#9a9a9c">680</div>
<div class="cl" style="top:1145px">        <span class="k">guard</span> <span class="k">let</span> image = <span class="ty">UIImage</span>(<span class="ty">systemName</span>: <span class="st">"arrow.clockwise.circle.fill"</span>, <span class="ty">withConfiguration</span>:</div>
<div class="ln" style="top:1179px;color:#9a9a9c"></div>
<div class="cl" style="top:1179px">            configuration) <span class="k">else</span> {</div>
<div class="ln" style="top:1213px;color:#9a9a9c">681</div>
<div class="cl" style="top:1213px">            <span class="k">return</span> <span class="k">nil</span></div>
<div class="ln" style="top:1247px;color:#9a9a9c">682</div>
<div class="cl" style="top:1247px">        }</div>
<div class="ln" style="top:1281px;color:#9a9a9c">683</div>
<div class="cl" style="top:1281px">        <span class="k">let</span> tintColor = <span class="iv">seedLabel</span>?.<span class="pr">fontColor</span> ?? .<span class="pr">gray</span></div>
<div class="ln" style="top:1315px;color:#9a9a9c">684</div>
<div class="cl" style="top:1315px">        <span class="k">let</span> tinted = image.<span class="pr">withTintColor</span>(tintColor, <span class="pr">renderingMode</span>: .<span class="pr">alwaysOriginal</span>)</div>
<div class="ln" style="top:1349px;color:#9a9a9c">685</div>
<div class="cl" style="top:1349px">        <span class="k">let</span> texture = <span class="ty">SKTexture</span>(<span class="ty">image</span>: tinted)</div>
</div></div>
<div class="a" style="left:658px;top:210px;width:1702px;height:78px;background:#ffffff;"></div>
<div class="ln" style="top:215px">211</div>
<div class="cl" style="top:215px"><span class="k">final</span> <span class="k">class</span> <span class="td">GameSceneUIController</span> {</div>
<div class="a" style="left:682px;top:248px;width:1654px;height:2px;background:#e4e4e4;"></div>
<div class="ln" style="top:254px">627</div>
<div class="cl" style="top:254px">    <span class="k">private</span> <span class="k">func</span> <span class="fd">layoutSeedContent</span>() {</div>
<div class="a" style="left:658px;top:288px;width:1702px;height:2px;background:#e4e4e4;"></div>
<div class="a" style="left:668px;top:464px;width:10px;height:612px;border:2px solid #2c72f6;background:#b3cdfb;border-radius:5px"></div>
<div class="a" style="left:834.5px;top:1010.5px;width:3px;height:29px;background:#2f6df6;"></div>
<div class="a" style="left:1012px;top:798px;width:16px;height:3px;background:#e8453c;"></div>
<div class="a" style="left:1752px;top:770px;width:50px;height:34px;background:#f6c3c2;border-radius:5px 0 0 5px"></div>
<div class="a" style="left:1804.5px;top:770px;width:555.5px;height:34px;background:#f6c3c2;"></div>
<div class="a" style="left:1802px;top:770px;width:2.5px;height:34px;background:#fce9e8;"></div>
<svg style="left:0;top:0" width="3024" height="2010"><circle cx="1778" cy="787.2" r="11.700" fill="#fff"/></svg>
<svg style="left:0;top:0" width="3024" height="2010"><polygon points="1785.80,790.43 1781.23,795.00 1774.77,795.00 1770.20,790.43 1770.20,783.97 1774.77,779.40 1781.23,779.40 1785.80,783.97" fill="#e5463b" stroke="#e5463b" stroke-width="3.90" stroke-linejoin="round"/><path d="M1774.78 783.98L1781.22 790.42M1781.22 783.98L1774.78 790.42" stroke="#fff" stroke-width="2.44" stroke-linecap="round"/></svg>
<div class="t" style="left:1815.2px;top:776.00px;font-size:24.5px;color:#1c1c1e;letter-spacing:0.584px;">Invalid redeclaration of 'layoutDifficultyLabel()'</div>
<div class="a" style="left:2362px;top:1082px;width:28px;height:2px;background:#e8574d;"></div>
<div class="a" style="left:2368px;top:1059px;width:16px;height:46px;border-radius:8px;background:rgba(0,0,0,0.5)"></div>
<div class="a" style="left:658px;top:1370px;width:1733px;height:2px;background:#e0e0e0;"></div>
<div class="a" style="left:658px;top:1372px;width:1733px;height:54px;background:#fdfdfd;"></div>
<div class="a" style="left:658px;top:1426px;width:1733px;height:2px;background:#dcdcdc;"></div>
<svg style="left:686px;top:1388.3px;" width="35.2" height="22.7" viewBox="0 0 35.2 22.7" preserveAspectRatio="none"><path d="M3 0H24.500C25.800 0 26.800 .600 27.600 1.600L34.300 9.600C35.200 10.700 35.200 12 34.300 13.100L27.600 21.100C26.800 22.100 25.800 22.700 24.500 22.700H3C1.300 22.700 0 21.400 0 19.700V3C0 1.300 1.300 0 3 0Z" fill="#3478f6"/></svg>
<div class="t" style="left:2119.0px;top:1390.00px;font-size:22.6px;color:#8b8b8d;letter-spacing:0.620px;-webkit-text-stroke:0.4px #8b8b8d;">Line: 676  Col: 6</div>
<div class="a" style="left:2312.5px;top:1387px;width:2px;height:24px;background:#e0e0e2;"></div>
<svg style="left:2330.7px;top:1386.6px;" width="25.5" height="24.6" viewBox="0 0 25.5 24.6" preserveAspectRatio="none"><rect x="1.100" y="1.100" width="23.300" height="22.400" rx="4" fill="#fff" stroke="#2f6ef6" stroke-width="2.200"/><rect x="4.600" y="14.800" width="16.300" height="5.400" rx="1.200" fill="#2f6ef6"/></svg>
<div class="a" style="left:658px;top:1428px;width:1733px;height:434px;background:#ffffff;"></div>
<div class="a" style="left:1278px;top:1428px;width:2px;height:434px;background:#c9c9cb;"></div>
<div class="a" style="left:2360px;top:1428px;width:30px;height:380px;background:#fafafa;"></div>
<div class="a" style="left:2360px;top:1428px;width:2px;height:380px;background:#ececec;"></div>
<div class="a" style="left:1280px;top:1428px;width:1080px;height:83px;background:#fdf8ea;"></div>
<div class="a" style="left:1280px;top:1511px;width:1080px;height:2px;background:#e8e2d2;"></div>
<div class="a" style="left:1280px;top:1513px;width:1080px;height:83px;background:#fdf8ea;"></div>
<div class="a" style="left:1280px;top:1596px;width:1080px;height:2px;background:#e2e2da;"></div>
<div class="a" style="left:1280px;top:1598px;width:1080px;height:50px;background:#e9efe8;"></div>
<div class="a" style="left:1304.3px;top:1435px;font-family:'Liberation Mono',monospace;font-size:24.73px;white-space:pre;line-height:34px;height:34px;color:#141414;margin-top:1px;-webkit-text-stroke:0.35px">SKView implements focusItemsInRect: − caching for linear focus</div>
<div class="a" style="left:1304.3px;top:1469px;font-family:'Liberation Mono',monospace;font-size:24.73px;white-space:pre;line-height:34px;height:34px;color:#141414;margin-top:1px;-webkit-text-stroke:0.35px">movement is limited as long as this view is on screen.</div>
<div class="a" style="left:1304.3px;top:1521px;font-family:'Liberation Mono',monospace;font-size:24.73px;white-space:pre;line-height:34px;height:34px;color:#141414;margin-top:1px;-webkit-text-stroke:0.35px">AddInstanceForFactory: No factory registered for id &lt;CFUUID</div>
<div class="a" style="left:1304.3px;top:1555px;font-family:'Liberation Mono',monospace;font-size:24.73px;white-space:pre;line-height:34px;height:34px;color:#141414;margin-top:1px;-webkit-text-stroke:0.35px">0x600000223560&gt; F8BB1C28−BAE8−11D6−9C31−00039315CD46</div>
<div class="a" style="left:1304.3px;top:1607px;font-family:'Liberation Mono',monospace;font-size:24.73px;white-space:pre;line-height:34px;height:34px;color:#141414;margin-top:1px;-webkit-text-stroke:0.35px">Message from debugger: killed</div>
<div class="t" style="left:690.5px;top:1825.00px;font-size:22.5px;color:#2a2a2c;letter-spacing:0.073px;">Auto</div>
<svg style="left:746.5px;top:1824.5px;" width="10.5" height="20" viewBox="0 0 10.5 20" preserveAspectRatio="none"><path d="M1.300 7L5.250 2.800L9.200 7M1.300 13L5.250 17.200L9.200 13" fill="none" stroke="#4a4a4c" stroke-width="2.200" stroke-linecap="round" stroke-linejoin="round"/></svg>
<div class="a" style="left:783.6px;top:1823px;width:2px;height:24px;background:#dededf;"></div>
<svg style="left:804px;top:1825px;" width="30" height="19.5" viewBox="0 0 30 19.5" preserveAspectRatio="none"><path d="M1 9.750C5 2.800 10 1 15 1C20 1 25 2.800 29 9.750C25 16.700 20 18.500 15 18.500C10 18.500 5 16.700 1 9.750Z" fill="none" stroke="#bcbcbe" stroke-width="1.900" stroke-linejoin="round"/><circle cx="15" cy="9.750" r="5.900" fill="#bcbcbe"/><circle cx="15" cy="9.750" r="2.100" fill="#fff"/></svg>
<svg style="left:860px;top:1821.5px;" width="26" height="26" viewBox="0 0 26 26" preserveAspectRatio="none"><circle cx="13" cy="13" r="11.900" fill="none" stroke="#bcbcbe" stroke-width="1.900"/><circle cx="13" cy="7.600" r="1.500" fill="#bcbcbe"/><path d="M10.800 11.300H13.300V19M10.300 19.300H16" fill="none" stroke="#bcbcbe" stroke-width="1.700" stroke-linecap="round" stroke-linejoin="round"/></svg>
<div class="a" style="left:905.5px;top:1811.5px;width:346px;height:44.500px;border-radius:12px;background:#f0f0f0;border:1.500px solid #d9d9db"></div>
<svg style="left:915.7px;top:1821px;" width="25.5" height="25.5" viewBox="0 0 25.5 25.5" preserveAspectRatio="none"><circle cx="12.750" cy="12.750" r="11.600" fill="none" stroke="#737375" stroke-width="1.900"/><path d="M6.500 9H19M8.700 13.200H16.800M11 17.400H14.500" stroke="#737375" stroke-width="1.800" stroke-linecap="round"/></svg>
<div class="t" style="left:950.5px;top:1824.00px;font-size:22.3px;color:#c2c2c4;letter-spacing:0.390px;">Filter</div>
<svg style="left:1310.6px;top:1824.1px;" width="30" height="19.5" viewBox="0 0 30 19.5" preserveAspectRatio="none"><path d="M1 9.750C5 2.800 10 1 15 1C20 1 25 2.800 29 9.750C25 16.700 20 18.500 15 18.500C10 18.500 5 16.700 1 9.750Z" fill="none" stroke="#bcbcbe" stroke-width="1.900" stroke-linejoin="round"/><circle cx="15" cy="9.750" r="5.900" fill="#bcbcbe"/><circle cx="15" cy="9.750" r="2.100" fill="#fff"/></svg>
<svg style="left:1375px;top:1821px;" width="22.1" height="26" viewBox="0 0 23 26.5" preserveAspectRatio="none"><rect x="0" y="0" width="23" height="12" rx="6" fill="#2f6ef6"/><circle cx="6.300" cy="6" r="3" fill="#fff"/><rect x="0" y="14.500" width="23" height="12" rx="6" fill="#2f6ef6"/><circle cx="16.700" cy="20.500" r="3" fill="#fff"/></svg>
<div class="a" style="left:1829.5px;top:1811.5px;width:346px;height:44.500px;border-radius:12px;background:#f0f0f0;border:1.500px solid #d9d9db"></div>
<svg style="left:1839.2px;top:1820.8px;" width="51.6" height="25.5" viewBox="0 0 51 25.5" preserveAspectRatio="none"><rect x="0.900" y="0.900" width="49.200" height="23.700" rx="11.850" fill="none" stroke="#737375" stroke-width="1.800"/><path d="M9.500 8.300H23M11.800 12.750H20.700M14 17.200H18.500" stroke="#737375" stroke-width="1.800" stroke-linecap="round"/><path d="M33 10.500L37.200 14.700L41.400 10.500" fill="none" stroke="#737375" stroke-width="2.200" stroke-linecap="round" stroke-linejoin="round"/></svg>
<div class="t" style="left:1898.5px;top:1824.00px;font-size:22.3px;color:#c2c2c4;letter-spacing:0.390px;">Filter</div>
<svg style="left:2195px;top:1821px;" width="22.5" height="27.5" viewBox="0 0 22.5 27.5" preserveAspectRatio="none"><path d="M1 5.800H21.500M7.500 5.500V3.300C7.500 2.200 8.200 1.500 9.300 1.500H13.200C14.300 1.500 15 2.200 15 3.300V5.500" fill="none" stroke="#7a7a7c" stroke-width="1.900" stroke-linecap="round"/><path d="M3.300 6L4.500 24C4.600 25.500 5.400 26.300 6.900 26.300H15.600C17.100 26.300 17.900 25.500 18 24L19.200 6" fill="none" stroke="#7a7a7c" stroke-width="1.900" stroke-linejoin="round"/><path d="M8 10V22M11.250 10V22M14.500 10V22" stroke="#7a7a7c" stroke-width="1.500" stroke-linecap="round"/></svg>
<div class="a" style="left:2251.3px;top:1823px;width:2px;height:24px;background:#dededf;"></div>
<svg style="left:2271px;top:1822.1px;" width="26" height="25.3" viewBox="0 0 26 24.6" preserveAspectRatio="none"><rect x="1.100" y="1.100" width="23.800" height="22.400" rx="4" fill="#fff" stroke="#2f6ef6" stroke-width="2.200"/><rect x="4.600" y="4.600" width="5.400" height="15.400" rx="1.200" fill="#2f6ef6"/></svg>
<svg style="left:2330.7px;top:1822.1px;" width="26" height="25.3" viewBox="0 0 26 24.6" preserveAspectRatio="none"><rect x="1.100" y="1.100" width="23.800" height="22.400" rx="4" fill="#fff" stroke="#2f6ef6" stroke-width="2.200"/><rect x="16" y="4.600" width="5.400" height="15.400" rx="1.200" fill="#2f6ef6"/></svg>
<svg style="left:2582.8px;top:168px;" width="20.5" height="25.8" viewBox="0 0 20.5 25.8" preserveAspectRatio="none"><path d="M3 0H10.200V7.300C10.200 9.300 11.200 10.300 13.200 10.300H20.500V22.800C20.500 24.600 19.300 25.800 17.500 25.800H3C1.200 25.800 0 24.600 0 22.800V3C0 1.200 1.200 0 3 0Z" fill="#3478f6"/><path d="M12.200 0.300L20.200 8.300H13.700C12.700 8.300 12.200 7.800 12.200 6.800Z" fill="#3478f6"/></svg>
<svg style="left:2639px;top:168px;" width="26" height="26" viewBox="0 0 26 26" preserveAspectRatio="none"><circle cx="13" cy="13" r="11.900" fill="none" stroke="#6f6f72" stroke-width="1.900"/><path d="M13 5.800V13.300H7" fill="none" stroke="#6f6f72" stroke-width="1.900" stroke-linecap="round" stroke-linejoin="round"/></svg>
<svg style="left:2699px;top:168px;" width="26" height="26" viewBox="0 0 26 26" preserveAspectRatio="none"><circle cx="13" cy="13" r="11.900" fill="none" stroke="#6f6f72" stroke-width="1.900"/></svg>
<div class="t" style="left:2706.8px;top:172.00px;font-size:19.5px;color:#6f6f72;font-weight:bold;">?</div>
<div class="t" style="left:2407.0px;top:222.00px;font-size:26px;color:#6d6d70;letter-spacing:-0.331px;font-weight:bold;">Identity and Type</div>
<div class="t" style="left:2497.0px;top:280.00px;font-size:21px;color:#2a2a2c;letter-spacing:-0.669px;">Name</div>
<div class="a" style="left:2561.5px;top:273.5px;width:335px;height:33.500px;background:#fff;border:1px solid #dededf;border-bottom:1.500px solid #b4b4b6"></div>
<div class="t" style="left:2568.5px;top:280.00px;font-size:22.6px;color:#262628;letter-spacing:0.436px;">GameSceneSupport.swift</div>
<div class="t" style="left:2506.0px;top:324.00px;font-size:21px;color:#2a2a2c;letter-spacing:-0.555px;">Type</div>
<div class="a" style="left:2559.7px;top:318px;width:338.600px;height:32.500px;border-radius:8px;background:#fff;box-shadow:0 0.500px 1.500px rgba(0,0,0,.35),0 0 0 0.500px rgba(0,0,0,.08)"></div>
<div class="t" style="left:2573.0px;top:324.00px;font-size:22.6px;color:#262628;letter-spacing:0.546px;">Default - Swift Source</div>
<div class="a" style="left:2870px;top:322px;width:24.3px;height:24px;border-radius:5.5px;background:linear-gradient(#4a8df8,#2f74f5)"></div>
<svg style="left:0px;top:0px;" width="3024" height="2010" viewBox="0 0 3024 2010" preserveAspectRatio="none"><path d="M2877.85 331.0L2882.15 326.8L2886.4500000000003 331.0M2877.85 337.0L2882.15 341.2L2886.4500000000003 337.0" fill="none" stroke="#fff" stroke-width="2.200" stroke-linecap="round" stroke-linejoin="round"/></svg>
<div class="a" style="left:2408px;top:360.5px;width:488px;height:2px;background:#d4d5d7;"></div>
<div class="t" style="left:2470.5px;top:377.00px;font-size:21px;color:#2a2a2c;letter-spacing:0.160px;">Location</div>
<div class="a" style="left:2562px;top:372.400px;width:336px;height:31.500px;border-radius:8px;background:#f3f3f4;border:1.500px solid #e1e1e3"></div>
<div class="t" style="left:2575.0px;top:377.00px;font-size:22.6px;color:#b6b6b8;letter-spacing:0.184px;">Relative to Group</div>
<svg style="left:2877px;top:381px;" width="10.5" height="15" viewBox="0 0 10.5 15" preserveAspectRatio="none"><path d="M1.200 5L5.250 1.200L9.300 5M1.200 10L5.250 13.800L9.300 10" fill="none" stroke="#a9a9ab" stroke-width="1.900" stroke-linecap="round" stroke-linejoin="round"/></svg>
<div class="t" style="left:2565.2px;top:418.00px;font-size:22.6px;color:#000;letter-spacing:0.403px;">GameSceneSupport.swift</div>
<div class="t" style="left:2469.4px;top:454.00px;font-size:21px;color:#2a2a2c;letter-spacing:-0.158px;">Full Path</div>
<div class="t" style="left:2564.7px;top:454.00px;font-size:22.6px;color:#2a2a2c;letter-spacing:0.408px;">/Users/jrowe/Documents/</div>
<div class="t" style="left:2565.2px;top:482.00px;font-size:22.6px;color:#2a2a2c;letter-spacing:0.737px;">code/wiglaf-software/</div>
<div class="t" style="left:2565.2px;top:510.00px;font-size:22.6px;color:#2a2a2c;letter-spacing:0.346px;">JustCatMazes/</div>
<div class="t" style="left:2565.2px;top:538.00px;font-size:22.6px;color:#2a2a2c;letter-spacing:0.346px;">JustCatMazes/</div>
<div class="t" style="left:2565.2px;top:567.00px;font-size:22.6px;color:#2a2a2c;letter-spacing:0.346px;">JustCatMazes/</div>
<div class="t" style="left:2565.2px;top:594.00px;font-size:22.6px;color:#2a2a2c;letter-spacing:0.403px;">GameSceneSupport.swift</div>
<svg style="left:2838px;top:594.6px;" width="19.6" height="19.6" viewBox="0 0 19.6 19.6" preserveAspectRatio="none"><circle cx="9.800" cy="9.800" r="9.800" fill="#6a6a6c"/><path d="M4.800 9.800H14.300M10.600 6L14.500 9.800L10.600 13.600" fill="none" stroke="#ecedef" stroke-width="1.900" stroke-linecap="round" stroke-linejoin="round"/></svg>
<div class="a" style="left:2408px;top:644.3px;width:488px;height:2px;background:#d4d5d7;"></div>
<div class="t" style="left:2407.0px;top:658.00px;font-size:26px;color:#6d6d70;letter-spacing:-0.887px;font-weight:bold;">On Demand Resource Tags</div>
<div class="a" style="left:2410px;top:710px;width:486px;height:36.500px;background:#f5f5f6;border-bottom:1.500px solid #d9d9db"></div>
<div class="t" style="left:2416.5px;top:716.00px;font-size:22.6px;color:#bbbbbd;letter-spacing:0.405px;">Only resources are taggable</div>
<div class="a" style="left:2408px;top:772px;width:488px;height:2px;background:#d4d5d7;"></div>
<div class="t" style="left:2407.0px;top:786.00px;font-size:26px;color:#6d6d70;letter-spacing:-0.456px;font-weight:bold;">Target Membership</div>
<div class="a" style="left:2408px;top:826.500px;width:488px;height:219px;background:#fff;border:2px solid #b2b2b4"></div>
<svg style="left:2428px;top:838px;" width="56.5" height="56.5" viewBox="0 0 56 56" preserveAspectRatio="none"><rect x="0" y="0" width="56" height="56" rx="13.5" fill="#4bae49"/><rect x="2.500" y="2.500" width="51" height="51" rx="11" fill="#52b650" opacity=".55"/><path d="M15 45.500C8.500 45.500 6.300 40 7.200 35C7.800 31.500 8.300 29 10.200 29.200" fill="none" stroke="#f07a22" stroke-width="5.200" stroke-linecap="round"/><path d="M20.500 28C15.500 32 11.500 38 11.800 43C12 46.500 13.500 48 16 48H38.600C38.900 43 37.800 36 36.800 30Z" fill="#f07a22"/><path d="M17.200 15.500L18.600 7.400C18.700 6.800 19.300 6.700 19.700 7.100L25.200 12.700C27.500 12.300 31.500 12.300 34.800 12.700L39 7.200C39.400 6.700 40 6.900 40.100 7.500L42.200 16C42.600 19 42.500 23 41.500 25.500C40.300 28.800 36 31.500 30.500 31.500C24 31.500 19 29.500 17.500 25.500C16.800 23 16.800 18.500 17.200 15.500Z" fill="#f07a22"/><path d="M19.600 10.600L22.900 14.300L20.200 15.200Z" fill="#e83a3a"/><path d="M39.600 10.400L36.900 13.700L40.300 15Z" fill="#e83a3a"/><circle cx="30.600" cy="25.700" r="4.500" fill="#f6f1e6"/><path d="M29.100 23.200C29.100 22.300 32.100 22.300 32.100 23.200C32.100 24.200 31.100 25 30.600 25C30.100 25 29.100 24.200 29.100 23.200Z" fill="#ee4f7a"/><path d="M27.700 26.600C28 28.200 30.200 28.200 30.600 26.800C31 28.200 33.300 28.200 33.600 26.600" fill="none" stroke="#1d1d1b" stroke-width="0.900" stroke-linecap="round"/><ellipse cx="26.600" cy="20.100" rx="1.150" ry="1.900" fill="#1d1d1b"/><ellipse cx="34.800" cy="19.900" rx="1.150" ry="1.900" fill="#1d1d1b"/><path d="M24.800 24.300L11.200 20.800M25 25.700L12.300 25.400M24.800 26.900L14.300 30.600M36.600 23.900L47.800 21.700M36.600 25.700L48.200 26.800M36.600 27L46.700 30.800" stroke="#1d1d1b" stroke-width="0.950" stroke-linecap="round"/><path d="M20.100 35.300C23.500 35.300 25.700 37.500 25 40.500C24.500 42.500 22.500 43.500 23.800 44.800C25 45.500 26.500 46 27.200 47.600" fill="none" stroke="#7a3a10" stroke-width="1" stroke-linecap="round"/><path d="M31.300 39V43.500C31.500 45 33 46 33.500 47.600M36 45.500L37 47.500" fill="none" stroke="#7a3a10" stroke-width="1" stroke-linecap="round"/><circle cx="45.500" cy="42" r="5.900" fill="#e84a1f"/><path d="M41.500 39.500L46 37M41 42.500L48.500 38.300M42 45.300L50.300 40.500M44.500 47L51 43" stroke="#f4793f" stroke-width="0.800" stroke-linecap="round"/></svg>
<div class="t" style="left:2497.0px;top:842.00px;font-size:22.6px;color:#262628;letter-spacing:0.312px;">JustCatMazes</div>
<div class="t" style="left:2497.0px;top:870.00px;font-size:22.6px;color:#808082;letter-spacing:0.401px;">Default</div>
<div class="a" style="left:2410.5px;top:1005px;width:484px;height:1.5px;background:#dcdcde;"></div>
<svg style="left:2426.7px;top:1017px;" width="19" height="19" viewBox="0 0 19 19" preserveAspectRatio="none"><path d="M9.500 1.200V17.800M1.200 9.500H17.800" stroke="#1c1c1e" stroke-width="2.700" stroke-linecap="round"/></svg>
<div class="a" style="left:2464.5px;top:1014px;width:1.5px;height:24px;background:#dcdcde;"></div>
<svg style="left:2485.4px;top:1017px;" width="18" height="19" viewBox="0 0 18 19" preserveAspectRatio="none"><path d="M1 9.500H17" stroke="#8a8a8c" stroke-width="1.900" stroke-linecap="round"/></svg>
<div class="a" style="left:2522.2px;top:1014px;width:1.5px;height:24px;background:#dcdcde;"></div>
<svg style="left:2542.6px;top:1017px;" width="19.5" height="19.5" viewBox="0 0 19.5 19.5" preserveAspectRatio="none"><path d="M1.300 18.200L14 5.500" stroke="#8a8a8c" stroke-width="2.600" stroke-linecap="round"/><path d="M16.300 3.200L17.600 1.900" stroke="#8a8a8c" stroke-width="2.600" stroke-linecap="round"/></svg>
<div class="a" style="left:2408px;top:1061.6px;width:488px;height:2px;background:#d4d5d7;"></div>
<div class="t" style="left:2407.0px;top:1076.00px;font-size:26px;color:#6d6d70;letter-spacing:-0.477px;font-weight:bold;">Text Settings</div>
<div class="t" style="left:2416.8px;top:1132.00px;font-size:21px;color:#2a2a2c;">Text Encoding</div>
<div class="a" style="left:2556px;top:1126.5px;width:346px;height:29.5px;border-radius:7px;background:#fdfdfd;box-shadow:0 0.700px 1.300px rgba(0,0,0,.20)"></div>
<div class="t" style="left:2567.0px;top:1131.00px;font-size:22.6px;color:#b6b6b8;letter-spacing:0.293px;">No Explicit Encoding</div>
<div class="a" style="left:2875.7px;top:1130.5px;width:24.5px;height:22.0px;border-radius:5px;background:linear-gradient(#4a8df8,#2f74f5)"></div>
<svg style="left:0px;top:0px;" width="3024" height="2010" viewBox="0 0 3024 2010" preserveAspectRatio="none"><path d="M2883.6499999999996 1138.5L2887.95 1134.3L2892.25 1138.5M2883.6499999999996 1144.5L2887.95 1148.7L2892.25 1144.5" fill="none" stroke="#fff" stroke-width="2.200" stroke-linecap="round" stroke-linejoin="round"/></svg>
<div class="t" style="left:2429.6px;top:1176.00px;font-size:21px;color:#2a2a2c;">Line Endings</div>
<div class="a" style="left:2556px;top:1170.4px;width:346px;height:29.5px;border-radius:7px;background:#fdfdfd;box-shadow:0 0.700px 1.300px rgba(0,0,0,.20)"></div>
<div class="t" style="left:2567.0px;top:1175.00px;font-size:22.6px;color:#b6b6b8;letter-spacing:0.275px;">No Explicit Line Endings</div>
<div class="a" style="left:2875.7px;top:1174.4px;width:24.5px;height:22.0px;border-radius:5px;background:linear-gradient(#4a8df8,#2f74f5)"></div>
<svg style="left:0px;top:0px;" width="3024" height="2010" viewBox="0 0 3024 2010" preserveAspectRatio="none"><path d="M2883.6499999999996 1182.4L2887.95 1178.2L2892.25 1182.4M2883.6499999999996 1188.4L2887.95 1192.6000000000001L2892.25 1188.4" fill="none" stroke="#fff" stroke-width="2.200" stroke-linecap="round" stroke-linejoin="round"/></svg>
<div class="a" style="left:2408px;top:1211.5px;width:488px;height:2px;background:#d4d5d7;"></div>
<div class="t" style="left:2429.6px;top:1230.00px;font-size:21px;color:#2a2a2c;letter-spacing:0.319px;">Indent Using</div>
<div class="a" style="left:2562px;top:1224px;width:335.800px;height:31.600px;border-radius:8px;background:#fff;box-shadow:0 0.500px 1.500px rgba(0,0,0,.35),0 0 0 0.500px rgba(0,0,0,.08)"></div>
<div class="t" style="left:2574.7px;top:1230.00px;font-size:22.6px;color:#262628;letter-spacing:-0.074px;">Spaces</div>
<div class="a" style="left:2870px;top:1228px;width:24.3px;height:23.6px;border-radius:5.5px;background:linear-gradient(#4a8df8,#2f74f5)"></div>
<svg style="left:0px;top:0px;" width="3024" height="2010" viewBox="0 0 3024 2010" preserveAspectRatio="none"><path d="M2877.85 1236.8L2882.15 1232.6L2886.4500000000003 1236.8M2877.85 1242.8L2882.15 1247.0L2886.4500000000003 1242.8" fill="none" stroke="#fff" stroke-width="2.200" stroke-linecap="round" stroke-linejoin="round"/></svg>
<div class="t" style="left:2485.7px;top:1276.00px;font-size:21px;color:#2a2a2c;letter-spacing:0.225px;">Widths</div>
<div class="a" style="left:2561.5px;top:1269.5px;width:123px;height:32.5px;background:#fff;border:1px solid #dededf;border-bottom:1.500px solid #b4b4b6"></div>
<div class="t" style="left:2665.0px;top:1276.00px;font-size:22.6px;color:#262628;">4</div>
<div class="a" style="left:2737.3px;top:1269.5px;width:125px;height:32.5px;background:#fff;border:1px solid #dededf;border-bottom:1.500px solid #b4b4b6"></div>
<div class="t" style="left:2842.5px;top:1276.00px;font-size:22.6px;color:#262628;">4</div>
<div class="a" style="left:2698px;top:1271px;width:22px;height:30.5px;border-radius:7px;background:#fff;box-shadow:0 0.500px 1.500px rgba(0,0,0,.35),0 0 0 0.500px rgba(0,0,0,.08)"></div>
<svg style="left:0px;top:0px;" width="3024" height="2010" viewBox="0 0 3024 2010" preserveAspectRatio="none"><path d="M2703.5 1281.95L2709.0 1276.95L2714.5 1281.95M2703.5 1290.55L2709.0 1295.55L2714.5 1290.55" fill="none" stroke="#1c1c1e" stroke-width="2.300" stroke-linecap="round" stroke-linejoin="round"/></svg>
<div class="a" style="left:2875.8px;top:1271px;width:22px;height:30.5px;border-radius:7px;background:#fff;box-shadow:0 0.500px 1.500px rgba(0,0,0,.35),0 0 0 0.500px rgba(0,0,0,.08)"></div>
<svg style="left:0px;top:0px;" width="3024" height="2010" viewBox="0 0 3024 2010" preserveAspectRatio="none"><path d="M2881.3 1281.95L2886.8 1276.95L2892.3 1281.95M2881.3 1290.55L2886.8 1295.55L2892.3 1290.55" fill="none" stroke="#1c1c1e" stroke-width="2.300" stroke-linecap="round" stroke-linejoin="round"/></svg>
<div class="t" style="left:2611.4px;top:1311.00px;font-size:21px;color:#2a2a2c;letter-spacing:-1.473px;">Tab</div>
<div class="t" style="left:2774.7px;top:1311.00px;font-size:21px;color:#2a2a2c;letter-spacing:0.384px;">Indent</div>
<div class="a" style="left:2408px;top:1362px;width:488px;height:2px;background:#d4d5d7;"></div>
</div></div></body></html>
